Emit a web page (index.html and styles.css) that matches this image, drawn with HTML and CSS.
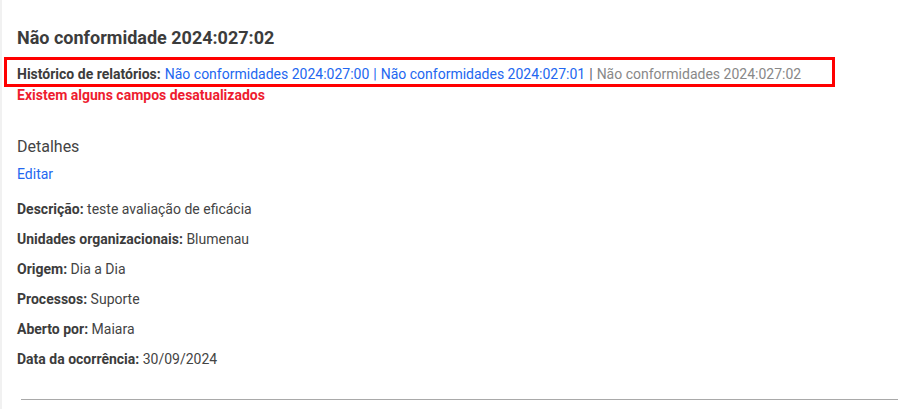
FILE: index.html
```html
<!DOCTYPE html>
<html lang="pt">
<head>
<meta charset="utf-8">
<title>Não conformidade 2024:027:02</title>
<link rel="stylesheet" href="styles.css">
</head>
<body>
<div class="page">
  <h1 class="title">Não conformidade 2024:027:02</h1>
  <div class="history">
    <span class="label">Histórico de relatórios:</span>
    <a class="link" href="#">Não conformidades 2024:027:00</a>
    <span class="sep sep-link">|</span>
    <a class="link" href="#">Não conformidades 2024:027:01</a>
    <span class="sep">|</span>
    <span class="current">Não conformidades 2024:027:02</span>
  </div>
  <div class="warning">Existem alguns campos desatualizados</div>

  <h2 class="section">Detalhes</h2>
  <a class="edit" href="#">Editar</a>

  <div class="details">
    <div class="row"><span class="label">Descrição:</span> teste avaliação de eficácia</div>
    <div class="row"><span class="label">Unidades organizacionais:</span> Blumenau</div>
    <div class="row"><span class="label">Origem:</span> Dia a Dia</div>
    <div class="row"><span class="label">Processos:</span> Suporte</div>
    <div class="row"><span class="label">Aberto por:</span> Maiara</div>
    <div class="row"><span class="label">Data da ocorrência:</span> 30/09/2024</div>
  </div>

  <div class="divider"></div>
</div>
</body>
</html>
```

FILE: styles.css
```css
html, body {
  margin: 0;
  padding: 0;
  background: #ffffff;
}

body {
  font-family: Roboto, "Liberation Sans", Arial, sans-serif;
  color: #444444;
  font-size: 14px;
}

.page {
  border-left: 2px solid #f1f1f1;
  min-height: 409px;
  box-sizing: border-box;
  padding: 26px 0 0 15px;
}

.title {
  margin: 0;
  font-size: 18px;
  font-weight: 700;
  color: #3c3c3c;
  line-height: 24px;
}

.history {
  margin: 7px 0 0 -13px;
  width: 831px;
  height: 30px;
  box-sizing: border-box;
  border: 3px solid #ff0000;
  padding: 6px 0 0 10px;
  display: flex;
  align-items: flex-start;
  gap: 4px;
  white-space: nowrap;
  line-height: 17px;
}

.label {
  font-weight: 700;
  color: #3c3c3c;
}

.link {
  color: #2367f0;
  text-decoration: none;
}

.sep {
  color: #555a6a;
}

.sep-link {
  color: #2367f0;
}

.current {
  color: #888888;
}

.warning {
  color: #ee1c2f;
  font-weight: 700;
  line-height: 17px;
}

.section {
  margin: 32px 0 0 0;
  font-size: 16px;
  font-weight: 400;
  color: #444444;
  line-height: 22px;
}

.edit {
  display: block;
  margin-top: 8px;
  color: #2367f0;
  text-decoration: none;
  line-height: 17px;
}

.details {
  margin-top: 18px;
  display: flex;
  flex-direction: column;
  gap: 13px;
}

.row {
  line-height: 17px;
  color: #444444;
}

.divider {
  margin: 31px 0 0 4px;
  border-top: 1px solid #a9a9a9;
}
```
